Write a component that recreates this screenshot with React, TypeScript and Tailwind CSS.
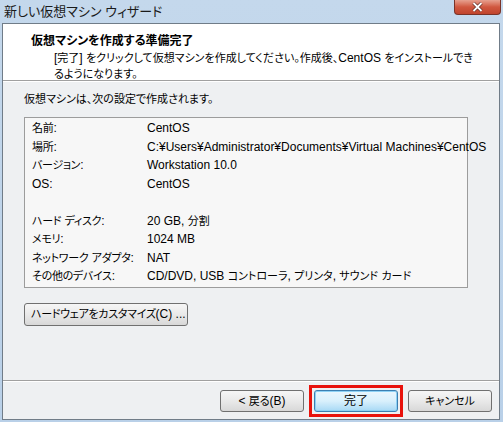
import React from "react";

const rows: [string, string][] = [
  ["名前:", "CentOS"],
  ["場所:", "C:¥Users¥Administrator¥Documents¥Virtual Machines¥CentOS"],
  ["バージョン:", "Workstation 10.0"],
  ["OS:", "CentOS"],
  ["", ""],
  ["ハード ディスク:", "20 GB, 分割"],
  ["メモリ:", "1024 MB"],
  ["ネットワーク アダプタ:", "NAT"],
  ["その他のデバイス:", "CD/DVD, USB コントローラ, プリンタ, サウンド カード"],
];

// Japanese runs are set a bit smaller so they keep the narrow width of the UI font
function T({ s, jp = "text-[11px]" }: { s: string; jp?: string }) {
  const parts = s.split(/([\u3000-\u30ff\u4e00-\u9fff\uff00-\uff9f]+)/);
  return (
    <>
      {parts.map((p, i) =>
        i % 2 === 1 ? (
          <span key={i} className={jp}>
            {p}
          </span>
        ) : (
          <span key={i}>{p}</span>
        ),
      )}
    </>
  );
}

const btn =
  "h-[22px] w-[84px] whitespace-nowrap rounded-[3px] border border-[#707070] bg-gradient-to-b from-[#f6f6f6] via-[#e9e9e9] to-[#d8d8d8] text-[12px] leading-none text-black";

export default function App() {
  return (
    <div
      className="flex h-[422px] w-[503px] flex-col bg-gradient-to-b from-[#c4d8ec] to-[#b9d0e8] pl-[2px] pr-[3px] pb-[2px] text-[12px] text-black [font-feature-settings:'palt']"
      style={{ fontFamily: '"Liberation Sans", "Noto Sans CJK JP", sans-serif' }}
    >
      {/* title bar */}
      <div className="relative flex h-[23px] shrink-0 items-center pl-[2px]">
        <span className="whitespace-nowrap text-[13px] text-[#1a1a1a]">新しい仮想マシン ウィザード</span>
        <div className="absolute right-[-1px] top-0 flex h-[15px] w-[47px] items-center justify-center rounded-b-[4px] border border-t-0 border-[#7a3328] bg-gradient-to-b from-[#e6a08f] via-[#d0573f] to-[#c0452e]">
          <svg width="11" height="10" viewBox="0 0 11 10">
            <path d="M1.5 1 L9.5 9 M9.5 1 L1.5 9" stroke="#5a2a22" strokeWidth="3.2" />
            <path d="M1.5 1 L9.5 9 M9.5 1 L1.5 9" stroke="#ffffff" strokeWidth="1.8" />
          </svg>
        </div>
      </div>

      {/* client area */}
      <div className="flex flex-1 flex-col border border-[#707c88] bg-[#eef0f2]">
        {/* header */}
        <div className="h-[57px] shrink-0 border-b border-[#a0a0a0] bg-white pt-[9px]">
          <div className="whitespace-nowrap pl-[28px] text-[12px] font-bold leading-[17px]">仮想マシンを作成する準備完了</div>
          <div className="whitespace-nowrap pl-[51px] leading-[16px]">
            <T s="[完了] をクリックして仮想マシンを作成してください。作成後、CentOS をインストールでき" />
            <br />
            <T s="るようになります。" />
          </div>
        </div>
        <div className="h-px bg-white" />

        {/* body */}
        <div className="flex flex-1 flex-col px-[21px] pt-[9px]">
          <div className="whitespace-nowrap leading-[16px]">
            <T s="仮想マシンは、次の設定で作成されます。" />
          </div>
          <div className="mt-[10px] mr-[10px] border border-[#9c9c9c] bg-[#f7f7f7] py-px">
            {rows.map(([k, v], i) => (
              <div key={i} className="flex h-[18.5px] items-center whitespace-nowrap">
                <span className="w-[122px] shrink-0 pl-[7px]">
                  <T s={k} jp="text-[11px] tracking-[-0.3px]" />
                </span>
                <span>
                  <T s={v} />
                </span>
              </div>
            ))}
          </div>
          <div className="mt-[15px]">
            <button className="h-[23px] w-[164px] whitespace-nowrap rounded-[3px] border border-[#707070] bg-gradient-to-b from-[#f6f6f6] via-[#e9e9e9] to-[#d8d8d8] pl-[6px] text-left text-[12px] leading-none">
              <T s="ハードウェアをカスタマイズ(C) ..." jp="text-[11px] tracking-[-0.3px]" />
            </button>
          </div>
        </div>

        {/* footer */}
        <div className="shrink-0 border-t border-[#a0a0a0]">
          <div className="h-px bg-white" />
          <div className="flex items-center justify-end gap-[5px] pr-[7px] pt-[3px] pb-[2px]">
            <button className={btn}>
              <T s="< 戻る(B)" />
            </button>
            <div className="border-[3px] border-[#e8120c] p-[2px]">
              <button className="h-[22px] w-[84px] rounded-[3px] border border-[#3c7fb1] bg-gradient-to-b from-[#eaf6fd] via-[#d9f0fc] to-[#a7d9f5] text-[12px] leading-none shadow-[inset_0_0_0_1px_#8ed1f5]">
                完了
              </button>
            </div>
            <button className={btn}>
              <T s="キャンセル" />
            </button>
          </div>
        </div>
      </div>
    </div>
  );
}
